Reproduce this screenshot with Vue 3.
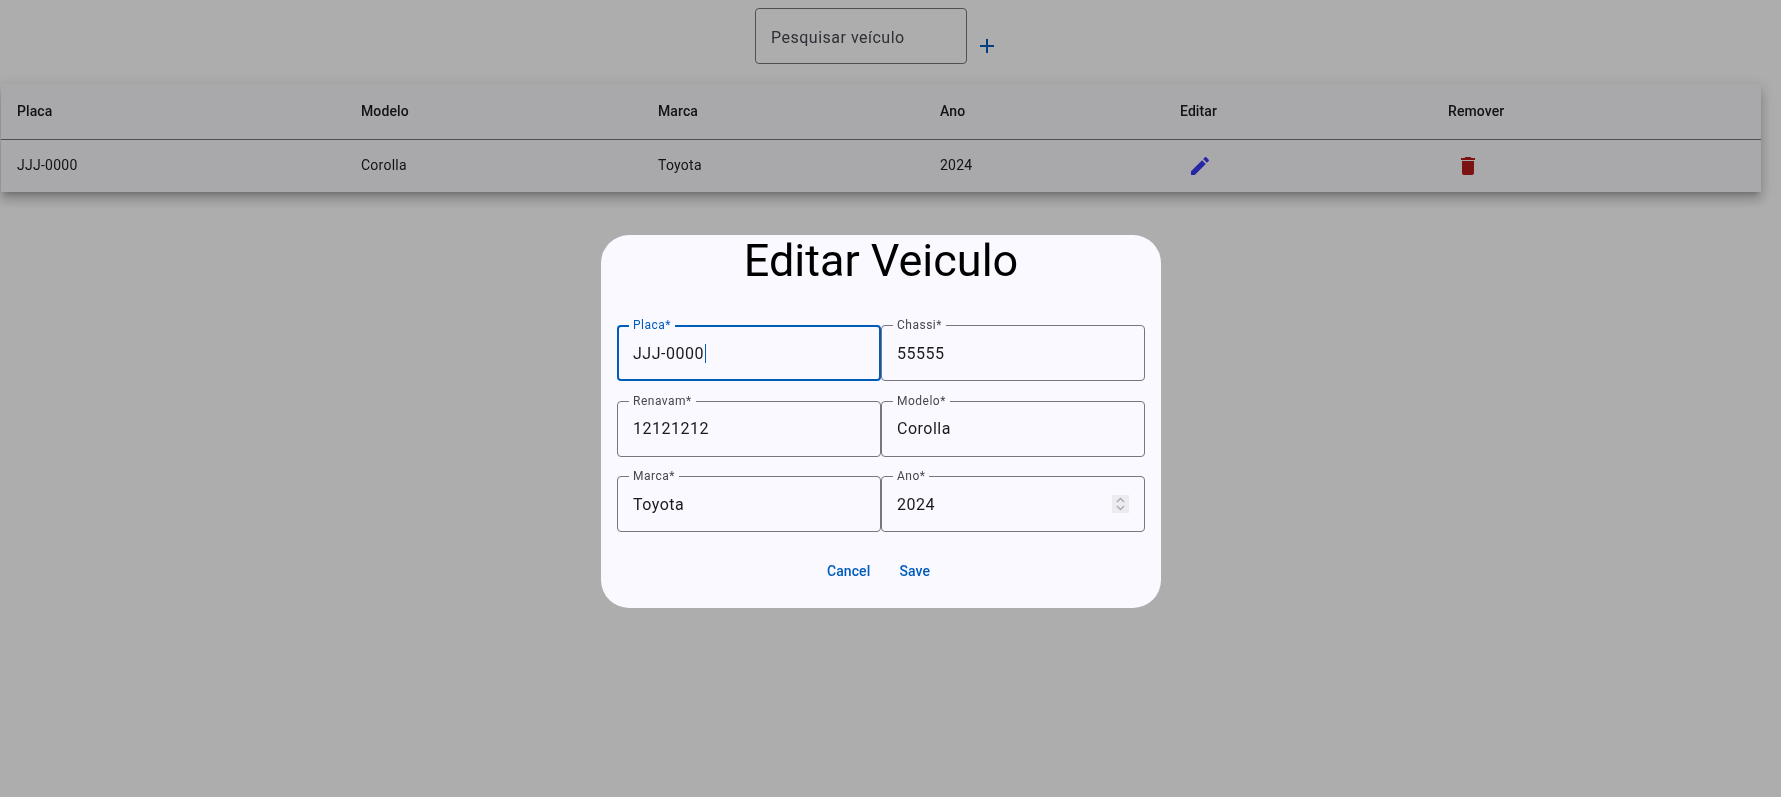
<template>
  <div class="page">
    <div class="toolbar">
      <label class="search">
        <input type="text" placeholder="Pesquisar veículo" />
      </label>
      <button type="button" class="icon-button add-button" aria-label="Adicionar">
        <svg viewBox="0 0 24 24"><path d="M19 13h-6v6h-2v-6H5v-2h6V5h2v6h6v2z" /></svg>
      </button>
    </div>

    <table class="vehicles">
      <thead>
        <tr>
          <th v-for="col in columns" :key="col.label" :style="{ width: col.width + 'px' }">{{ col.label }}</th>
        </tr>
      </thead>
      <tbody>
        <tr v-for="car in vehicles" :key="car.placa">
          <td>{{ car.placa }}</td>
          <td>{{ car.modelo }}</td>
          <td>{{ car.marca }}</td>
          <td>{{ car.ano }}</td>
          <td class="action-cell">
            <button type="button" class="icon-button edit-button" aria-label="Editar">
              <svg viewBox="0 0 24 24">
                <path d="M3 17.25V21h3.75L17.81 9.94l-3.75-3.75L3 17.25zM20.71 7.04c.39-.39.39-1.02 0-1.41l-2.34-2.34c-.39-.39-1.02-.39-1.41 0l-1.83 1.83 3.75 3.75 1.83-1.83z" />
              </svg>
            </button>
          </td>
          <td class="action-cell">
            <button type="button" class="icon-button delete-button" aria-label="Remover">
              <svg viewBox="0 0 24 24">
                <path d="M6 19c0 1.1.9 2 2 2h8c1.1 0 2-.9 2-2V7H6v12zM19 4h-3.5l-1-1h-5l-1 1H5v2h14V4z" />
              </svg>
            </button>
          </td>
        </tr>
      </tbody>
    </table>

    <div class="backdrop">
      <div class="dialog">
        <h2 class="dialog-title">Editar Veiculo</h2>

        <div class="form-grid">
          <div
            v-for="field in fields"
            :key="field.label"
            class="field"
            :class="{ focused: field.focused }"
          >
            <span class="field-label">{{ field.label }}*</span>
            <input type="text" :value="field.value" readonly />
            <span v-if="field.focused" class="caret"></span>
            <span v-if="field.spinner" class="spinner">
              <svg viewBox="0 0 17 18">
                <path d="M5 7l3.5-3.5L12 7M5 11l3.5 3.5L12 11" />
              </svg>
            </span>
          </div>
        </div>

        <div class="dialog-actions">
          <button type="button" class="text-button">Cancel</button>
          <button type="button" class="text-button">Save</button>
        </div>
      </div>
    </div>
  </div>
</template>

<script setup>
const columns = [
  { label: 'Placa', width: 344 },
  { label: 'Modelo', width: 297 },
  { label: 'Marca', width: 282 },
  { label: 'Ano', width: 240 },
  { label: 'Editar', width: 268 },
  { label: 'Remover', width: 329 },
]

const vehicles = [
  { placa: 'JJJ-0000', modelo: 'Corolla', marca: 'Toyota', ano: 2024 },
]

const fields = [
  { label: 'Placa', value: 'JJJ-0000', focused: true },
  { label: 'Chassi', value: '55555' },
  { label: 'Renavam', value: '12121212' },
  { label: 'Modelo', value: 'Corolla' },
  { label: 'Marca', value: 'Toyota' },
  { label: 'Ano', value: '2024', spinner: true },
]
</script>

<style>
html,
body {
  margin: 0;
  background: #ffffff;
}
</style>

<style scoped>
.page {
  position: relative;
  height: 797px;
  overflow: hidden;
  box-sizing: border-box;
  padding-right: 19px;
  font-family: Roboto, sans-serif;
  color: #1a1b1f;
  will-change: transform;
}

.toolbar {
  display: flex;
  justify-content: center;
  padding-top: 8px;
}

.search {
  display: block;
  width: 212px;
  height: 56px;
  box-sizing: border-box;
  border: 1px solid #79747e;
  border-radius: 4px;
}

.search input {
  width: 100%;
  height: 100%;
  box-sizing: border-box;
  padding: 2px 15px 0;
  border: none;
  outline: none;
  background: transparent;
  font-family: inherit;
  font-size: 16px;
  letter-spacing: 0.5px;
}

.search input::placeholder {
  color: #49454f;
  opacity: 1;
}

.icon-button {
  display: flex;
  align-items: center;
  justify-content: center;
  width: 40px;
  height: 40px;
  padding: 0;
  border: none;
  background: none;
  cursor: pointer;
}

.icon-button svg {
  width: 24px;
  height: 24px;
}

.add-button {
  margin-top: 18px;
  fill: #005cbb;
}

.vehicles {
  width: 1760px;
  margin: 18px 0 0 1px;
  border-collapse: collapse;
  table-layout: fixed;
  background: #faf9fd;
  font-size: 14px;
  box-shadow: 0 5px 5px -3px rgba(0, 0, 0, 0.2), 0 8px 10px 1px rgba(0, 0, 0, 0.14), 0 3px 14px 2px rgba(0, 0, 0, 0.12);
}

.vehicles th {
  box-sizing: border-box;
  height: 55px;
  padding: 0 16px 1px;
  border-bottom: 1px solid #79747e;
  text-align: left;
  font-weight: 500;
  letter-spacing: 0.1px;
}

.vehicles td {
  box-sizing: border-box;
  height: 53px;
  padding: 0 16px 1px;
  letter-spacing: 0.25px;
}

.vehicles td.action-cell {
  padding-bottom: 0;
}

.edit-button {
  fill: #3a3af5;
}

.delete-button {
  fill: #b71c1c;
}

.backdrop {
  position: absolute;
  inset: 0;
  display: flex;
  justify-content: center;
  align-items: flex-start;
  box-sizing: border-box;
  padding: 235px 19px 0 0;
  background: rgba(0, 0, 0, 0.32);
}

.dialog {
  width: 560px;
  height: 373px;
  box-sizing: border-box;
  padding: 0 16px;
  border-radius: 28px;
  background: #faf9ff;
}

.dialog-title {
  margin: 0 0 38px;
  text-align: center;
  font-size: 45px;
  font-weight: 400;
  line-height: 52px;
  color: #000000;
}

.form-grid {
  display: grid;
  grid-template-columns: 264px 264px;
  row-gap: 19.5px;
}

.field {
  position: relative;
  height: 56px;
  box-sizing: border-box;
  border: 1px solid #79747e;
  border-radius: 4px;
}

.field.focused {
  border: 2px solid #005cbb;
}

.field input {
  width: 100%;
  height: 100%;
  box-sizing: border-box;
  padding: 0 15px;
  border: none;
  outline: none;
  background: transparent;
  color: #1a1b1f;
  font-family: inherit;
  font-size: 16px;
  letter-spacing: 0.5px;
}

.field.focused input {
  padding: 0 14px;
}

.field-label {
  position: absolute;
  top: -8px;
  left: 11px;
  padding: 0 4px;
  background: #faf9ff;
  color: #49454f;
  font-size: 12px;
  line-height: 14px;
  letter-spacing: 0.5px;
}

.field.focused .field-label {
  top: -9px;
  left: 10px;
  color: #005cbb;
}

.caret {
  position: absolute;
  top: 17px;
  left: 86px;
  width: 1px;
  height: 19px;
  background: #005cbb;
}

.spinner {
  position: absolute;
  top: 18px;
  right: 15px;
  width: 17px;
  height: 18px;
  background: #ebebf0;
}

.spinner svg {
  display: block;
  width: 17px;
  height: 18px;
  fill: none;
  stroke: #a9a7b0;
  stroke-width: 1.4;
}

.dialog-actions {
  display: flex;
  justify-content: center;
  gap: 5px;
  margin-top: 19px;
  padding-right: 5px;
}

.text-button {
  height: 40px;
  padding: 0 12px;
  border: none;
  background: none;
  color: #005cbb;
  font-family: inherit;
  font-size: 14px;
  font-weight: 500;
  letter-spacing: 0.1px;
  cursor: pointer;
}
</style>
